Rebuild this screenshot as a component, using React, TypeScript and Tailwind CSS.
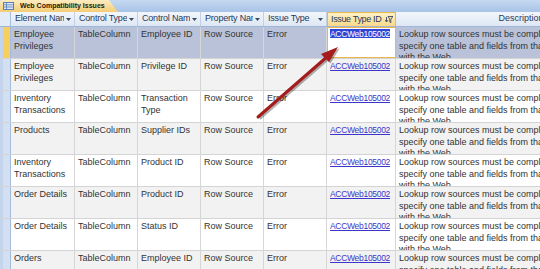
import React from 'react';

type Row = {
  element: string;
  controlType: string;
  controlName: string;
  property: string;
  issueType: string;
  issueId: string;
};

const rows: Row[] = [
  { element: 'Employee Privileges', controlType: 'TableColumn', controlName: 'Employee ID', property: 'Row Source', issueType: 'Error', issueId: 'ACCWeb105002' },
  { element: 'Employee Privileges', controlType: 'TableColumn', controlName: 'Privilege ID', property: 'Row Source', issueType: 'Error', issueId: 'ACCWeb105002' },
  { element: 'Inventory Transactions', controlType: 'TableColumn', controlName: 'Transaction Type', property: 'Row Source', issueType: 'Error', issueId: 'ACCWeb105002' },
  { element: 'Products', controlType: 'TableColumn', controlName: 'Supplier IDs', property: 'Row Source', issueType: 'Error', issueId: 'ACCWeb105002' },
  { element: 'Inventory Transactions', controlType: 'TableColumn', controlName: 'Product ID', property: 'Row Source', issueType: 'Error', issueId: 'ACCWeb105002' },
  { element: 'Order Details', controlType: 'TableColumn', controlName: 'Product ID', property: 'Row Source', issueType: 'Error', issueId: 'ACCWeb105002' },
  { element: 'Order Details', controlType: 'TableColumn', controlName: 'Status ID', property: 'Row Source', issueType: 'Error', issueId: 'ACCWeb105002' },
  { element: 'Orders', controlType: 'TableColumn', controlName: 'Employee ID', property: 'Row Source', issueType: 'Error', issueId: 'ACCWeb105002' },
];

function DropArrow() {
  return (
    <svg width="5" height="3" viewBox="0 0 5 3" className="shrink-0">
      <path d="M0 0h5L2.5 3z" fill="#3b4a66" />
    </svg>
  );
}

function FilterIcon() {
  return (
    <svg width="8" height="8" viewBox="0 0 8 8" className="shrink-0">
      <path d="M3 0.5h5L5.8 3.2v3.6L4.8 6V3.2z" fill="none" stroke="#3b4a66" strokeWidth="0.9" />
      <path d="M1.5 1v4.5M0 4l1.5 2L3 4" fill="none" stroke="#3b4a66" strokeWidth="0.9" />
    </svg>
  );
}

function HeaderCell({ label, width }: { label: string; width: string }) {
  return (
    <div className={`${width} shrink-0 flex items-center pl-[4px] pr-[3px] gap-[2px] border-r border-[#c2d0e4] overflow-hidden`}>
      <span className="flex-1 whitespace-nowrap overflow-hidden tracking-[-0.2px]">{label}</span>
      <DropArrow />
    </div>
  );
}

export default function App() {
  return (
    <div className="relative w-[540px] h-[269px] overflow-hidden bg-white font-['Liberation_Sans',Arial,sans-serif] text-[9px] text-[#333]">
      {/* document tab strip */}
      <div className="h-[12px] bg-gradient-to-b from-[#c6d9f1] to-[#a8c3e7] flex items-end">
        <div className="h-[12px] w-[118px] pl-[3px] flex items-center gap-[6px] bg-gradient-to-b from-[#fdecc0] to-[#f4cd74] [clip-path:polygon(0_0,109px_0,118px_100%,0_100%)] rounded-tl-[2px]">
          <svg width="11" height="8" viewBox="0 0 11 8">
            <rect x="0.5" y="0.5" width="10" height="7" fill="#dce8f7" stroke="#5d7fb5" />
            <path d="M0.5 2.8h10M0.5 5h10M3.5 0.5v7" stroke="#5d7fb5" strokeWidth="0.8" />
          </svg>
          <span className="font-bold text-[7px] text-[#2a2008] whitespace-nowrap">Web Compatibility Issues</span>
        </div>
      </div>

      {/* header row */}
      <div className="flex h-[15px] bg-gradient-to-b from-[#f2f6fb] to-[#dde7f4] border-b border-[#9fb6d6] text-[#27395a]">
        <div className="w-[11px] shrink-0 border-r border-[#a9bedc] bg-[#e3ebf6]" />
        <HeaderCell label="Element Name" width="w-[64px]" />
        <HeaderCell label="Control Type" width="w-[63px]" />
        <HeaderCell label="Control Name" width="w-[63px]" />
        <HeaderCell label="Property Name" width="w-[63px]" />
        <HeaderCell label="Issue Type" width="w-[63px]" />
        <div className="w-[69px] shrink-0 flex items-center pl-[3px] pr-[2px] gap-[1px] bg-gradient-to-b from-[#fff1c4] to-[#f9d98a] border-x border-t border-[#e5b84f] overflow-hidden">
          <span className="flex-1 whitespace-nowrap overflow-hidden tracking-[-0.35px]">Issue Type ID</span>
          <FilterIcon />
        </div>
        <div className="w-[250px] shrink-0 flex items-center justify-center">Description</div>
      </div>

      {/* data rows */}
      {rows.map((r, i) => {
        const selected = i === 0;
        const bg = selected ? 'bg-[#b9c2d9]' : i % 2 === 1 ? 'bg-[#f2f2f2]' : 'bg-white';
        const cell = 'shrink-0 px-[3px] pt-[2px] overflow-hidden border-r border-[#d6d6d6]';
        return (
          <div key={i} className={`flex h-[32px] border-b border-[#d4d4d4] leading-[11.5px] ${bg}`}>
            <div className="w-[11px] shrink-0 flex bg-[#d3e0f2] border-r border-[#a3bbdc]">
              <div className="w-[3px] bg-[#c3d4ec]" />
              <div className={`flex-1 ${selected ? 'bg-[#f6cf5f]' : ''}`} />
            </div>
            <div className={`${cell} w-[64px]`}>{r.element}</div>
            <div className={`${cell} w-[63px]`}>{r.controlType}</div>
            <div className={`${cell} w-[63px]`}>{r.controlName}</div>
            <div className={`${cell} w-[63px]`}>{r.property}</div>
            <div className={`${cell} w-[63px]`}>{r.issueType}</div>
            {selected ? (
              <div className="w-[69px] shrink-0 pl-[2px] pt-[1px] bg-white border border-[#eab64d] overflow-hidden whitespace-nowrap">
                <span className="underline text-white bg-[#2f45d8] text-[8.5px] tracking-[-0.3px]">{r.issueId}</span>
              </div>
            ) : (
              <div className={`${cell} w-[69px] whitespace-nowrap`}>
                <span className="underline text-[#3a36c8] text-[8.5px] tracking-[-0.3px]">{r.issueId}</span>
              </div>
            )}
            <div className="w-[250px] shrink-0 px-[3px] pt-[2px] overflow-hidden whitespace-nowrap">
              <div>Lookup row sources must be completely specified and</div>
              <div>specify one table and fields from that table to be compatible</div>
              <div>with the Web.</div>
            </div>
          </div>
        );
      })}

      {/* callout arrow */}
      <svg className="absolute left-0 top-0 pointer-events-none" width="540" height="269">
        <g transform="translate(1.5,1.5)" opacity="0.3">
          <line x1="258" y1="117" x2="328" y2="56" stroke="#000" strokeWidth="3" />
          <path d="M338 47 L321 54 L329 62 Z" fill="#000" />
        </g>
        <line x1="258" y1="117" x2="328" y2="56" stroke="#a51c1c" strokeWidth="3" strokeLinecap="round" />
        <path d="M338 47 L321 54 L329 62 Z" fill="#a51c1c" />
      </svg>
    </div>
  );
}
